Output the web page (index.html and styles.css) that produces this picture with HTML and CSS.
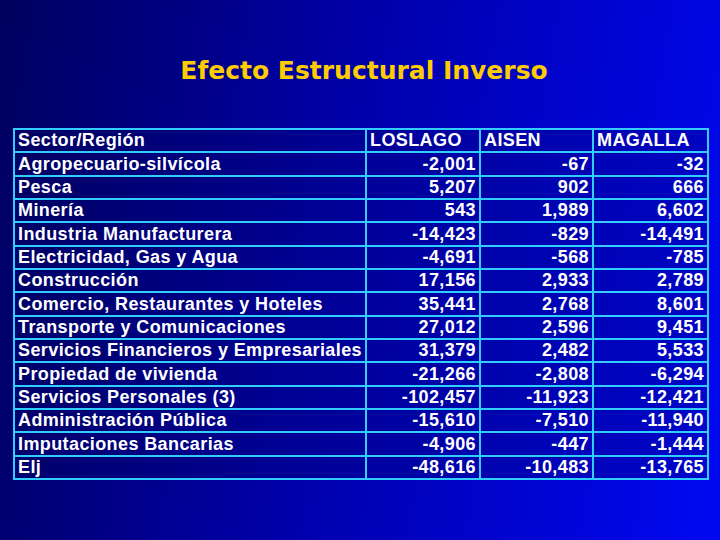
FILE: index.html
```html
<!DOCTYPE html>
<html lang="es">
<head>
<meta charset="utf-8">
<link rel="stylesheet" href="styles.css">
</head>
<body>
<div class="slide">
  <h1 class="title">Efecto Estructural Inverso</h1>
  <table class="data">
    <colgroup>
      <col class="c-sector"><col class="c-a"><col class="c-b"><col class="c-c">
    </colgroup>
    <thead>
      <tr><th class="sector">Sector/Región</th><th>LOSLAGO</th><th>AISEN</th><th>MAGALLA</th></tr>
    </thead>
    <tbody>
      <tr><td class="sector">Agropecuario-silvícola</td><td>-2,001</td><td>-67</td><td>-32</td></tr>
      <tr><td class="sector">Pesca</td><td>5,207</td><td>902</td><td>666</td></tr>
      <tr><td class="sector">Minería</td><td>543</td><td>1,989</td><td>6,602</td></tr>
      <tr><td class="sector">Industria Manufacturera</td><td>-14,423</td><td>-829</td><td>-14,491</td></tr>
      <tr><td class="sector">Electricidad, Gas y Agua</td><td>-4,691</td><td>-568</td><td>-785</td></tr>
      <tr><td class="sector">Construcción</td><td>17,156</td><td>2,933</td><td>2,789</td></tr>
      <tr><td class="sector">Comercio, Restaurantes y Hoteles</td><td>35,441</td><td>2,768</td><td>8,601</td></tr>
      <tr><td class="sector">Transporte y Comunicaciones</td><td>27,012</td><td>2,596</td><td>9,451</td></tr>
      <tr><td class="sector">Servicios Financieros y Empresariales</td><td>31,379</td><td>2,482</td><td>5,533</td></tr>
      <tr><td class="sector">Propiedad de vivienda</td><td>-21,266</td><td>-2,808</td><td>-6,294</td></tr>
      <tr><td class="sector">Servicios Personales (3)</td><td>-102,457</td><td>-11,923</td><td>-12,421</td></tr>
      <tr><td class="sector">Administración Pública</td><td>-15,610</td><td>-7,510</td><td>-11,940</td></tr>
      <tr><td class="sector">Imputaciones Bancarias</td><td>-4,906</td><td>-447</td><td>-1,444</td></tr>
      <tr><td class="sector">Elj</td><td>-48,616</td><td>-10,483</td><td>-13,765</td></tr>
    </tbody>
  </table>
</div>
</body>
</html>
```
FILE: styles.css
```css
html, body {
  margin: 0;
  padding: 0;
}
body {
  width: 720px;
  height: 540px;
  overflow: hidden;
}
.slide {
  width: 720px;
  height: 540px;
  box-sizing: border-box;
  background: linear-gradient(100deg, #00005e 0%, #0000a8 45%, #0008f2 100%);
  display: flex;
  flex-direction: column;
  align-items: center;
  padding-top: 54px;
}
.title {
  margin: 0 0 0 8px;
  font-family: "DejaVu Sans", sans-serif;
  font-weight: bold;
  font-size: 25px;
  line-height: 33px;
  color: #ffcc00;
  letter-spacing: 0;
}
.data {
  margin-top: 41px;
  margin-left: 2px;
  width: 694px;
  table-layout: fixed;
  border-collapse: collapse;
  border: 2px solid #33ccff;
  font-family: "Liberation Sans", Arial, sans-serif;
  font-weight: bold;
  font-size: 18px;
  color: #ffffff;
  letter-spacing: 0.4px;
}
.c-sector { width: 352px; }
.c-a { width: 114px; }
.c-b { width: 113px; }
.c-c { width: 115px; }
.data th, .data td {
  border: 2px solid #33ccff;
  height: 19.35px;
  padding: 1px 3px;
  line-height: 19px;
  white-space: nowrap;
  text-align: right;
  background: rgba(0, 0, 90, 0.25);
}
.data th {
  text-align: left;
}
.data .sector {
  text-align: left;
}
```
